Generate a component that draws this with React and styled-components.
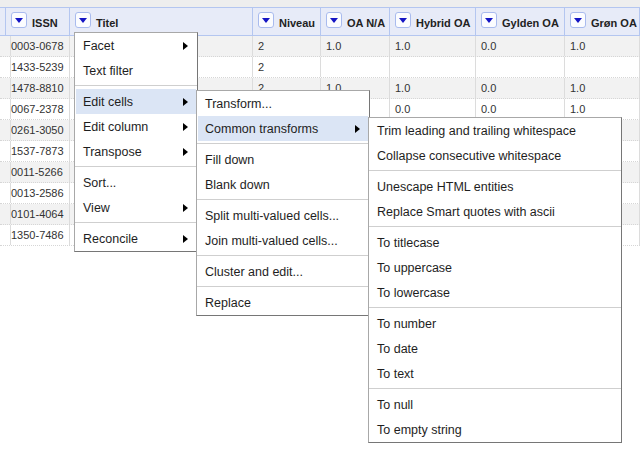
import React from "react";
import styled, { createGlobalStyle } from "styled-components";

const COLS = "6px 64px 183px 68px 69px 86px 89px 1fr";

const GlobalStyle = createGlobalStyle`
  body {
    margin: 0;
    background: #fff;
    font-family: "Liberation Sans", Arial, sans-serif;
  }
`;

const columns = ["", "ISSN", "Titel", "Niveau", "OA N/A", "Hybrid OA", "Gylden OA", "Grøn OA"];

// values under the open menus are left out, they can't be seen anyway
const rows = [
    ["0003-0678", "", "2", "1.0", "1.0", "0.0", "1.0"],
    ["1433-5239", "", "2", "", "", "", ""],
    ["1478-8810", "", "2", "1.0", "1.0", "0.0", "1.0"],
    ["0067-2378", "", "", "", "0.0", "0.0", "1.0"],
    ["0261-3050", "", "", "", "", "", ""],
    ["1537-7873", "", "", "", "", "", ""],
    ["0011-5266", "", "", "", "", "", ""],
    ["0013-2586", "", "", "", "", "", ""],
    ["0101-4064", "", "", "", "", "", ""],
    ["1350-7486", "", "", "", "", "", ""],
];

const columnMenu = [
    { label: "Facet", sub: true },
    { label: "Text filter" },
    "sep",
    { label: "Edit cells", sub: true, active: true },
    { label: "Edit column", sub: true },
    { label: "Transpose", sub: true },
    "sep",
    { label: "Sort..." },
    { label: "View", sub: true },
    "sep",
    { label: "Reconcile", sub: true },
];

const editCellsMenu = [
    { label: "Transform..." },
    { label: "Common transforms", sub: true, active: true },
    "sep",
    { label: "Fill down" },
    { label: "Blank down" },
    "sep",
    { label: "Split multi-valued cells..." },
    { label: "Join multi-valued cells..." },
    "sep",
    { label: "Cluster and edit..." },
    "sep",
    { label: "Replace" },
];

const transformsMenu = [
    { label: "Trim leading and trailing whitespace" },
    { label: "Collapse consecutive whitespace" },
    "sep",
    { label: "Unescape HTML entities" },
    { label: "Replace Smart quotes with ascii" },
    "sep",
    { label: "To titlecase" },
    { label: "To uppercase" },
    { label: "To lowercase" },
    "sep",
    { label: "To number" },
    { label: "To date" },
    { label: "To text" },
    "sep",
    { label: "To null" },
    { label: "To empty string" },
];

const DropdownMenu = ({ items, top, left, width }) => (
    <Menu $top={top} $left={left} $width={width}>
        {items.map((item, i) =>
            item === "sep" ? (
                <Separator key={i} />
            ) : (
                <Item key={i} $active={item.active}>
                    <span>{item.label}</span>
                    {item.sub && <Arrow />}
                </Item>
            )
        )}
    </Menu>
);

const App = () => {
    return (
        <Screen>
            <GlobalStyle />
            <TopStrip />
            <HeaderRow>
                {columns.map((name, i) => (
                    <HeaderCell key={i}>
                        {name && (
                            <ColumnButton>
                                <DownTriangle />
                            </ColumnButton>
                        )}
                        {name}
                    </HeaderCell>
                ))}
            </HeaderRow>
            {rows.map((row, r) => (
                <Row key={r} $odd={r % 2 === 0}>
                    <Cell />
                    {row.map((value, c) => (
                        <Cell key={c}>{value}</Cell>
                    ))}
                </Row>
            ))}

            <DropdownMenu items={columnMenu} top={32} left={74} width={124} />
            <DropdownMenu items={editCellsMenu} top={90} left={196} width={174} />
            <DropdownMenu items={transformsMenu} top={117} left={368} width={254} />
        </Screen>
    );
};

const Screen = styled.div`
    position: relative;
    width: 640px;
    height: 462px;
    overflow: hidden;
    background: #fff;
`;

const TopStrip = styled.div`
    height: 7px;
    background: #eeeeee;
`;

const HeaderRow = styled.div`
    display: grid;
    grid-template-columns: ${COLS};
    height: 29px;
    box-sizing: border-box;
    border-top: 1px solid #b4c6f0;
    border-bottom: 1px solid #b4c6f0;
    background: #e7ebf8;
`;

const HeaderCell = styled.div`
    display: flex;
    align-items: center;
    gap: 5px;
    padding: 3px 0 0 5px;
    border-right: 1px solid #b4c6f0;
    font-size: 11px;
    font-weight: bold;
    color: #222;
    white-space: nowrap;
    overflow: hidden;
`;

const ColumnButton = styled.span`
    align-self: flex-start;
    margin-top: 1px;
    flex: none;
    width: 16px;
    height: 16px;
    box-sizing: border-box;
    border: 1px solid #a9bbee;
    border-radius: 3px;
    background: #fbfcff;
    display: flex;
    align-items: center;
    justify-content: center;
`;

const DownTriangle = styled.span`
    width: 0;
    height: 0;
    border-left: 4px solid transparent;
    border-right: 4px solid transparent;
    border-top: 5px solid #1515c4;
    margin-top: 1px;
`;

const Row = styled.div`
    display: grid;
    grid-template-columns: ${COLS};
    height: 21px;
    box-sizing: border-box;
    border-bottom: 1px dotted #d6d6d6;
    background: ${(p) => (p.$odd ? "#f2f2f2" : "#fff")};
`;

const Cell = styled.div`
    border-right: 1px solid #dcdcdc;
    padding: 0 5px;
    font-size: 11px;
    line-height: 20px;
    color: #333;
    white-space: nowrap;
    overflow: hidden;
`;

const Menu = styled.div`
    position: absolute;
    top: ${(p) => p.$top}px;
    left: ${(p) => p.$left}px;
    width: ${(p) => p.$width}px;
    box-sizing: border-box;
    background: #fff;
    border: 1px solid;
    border-color: #a8a8a8 #767676 #767676 #a8a8a8;
    font-size: 12.5px;
    color: #1e1e1e;
`;

const Item = styled.div`
    height: 25px;
    margin: 0 1px;
    padding: 0 8px 0 7px;
    display: flex;
    align-items: center;
    justify-content: space-between;
    white-space: nowrap;
    background: ${(p) => (p.$active ? "#dbe5f5" : "transparent")};
`;

const Arrow = styled.span`
    width: 0;
    height: 0;
    border-top: 4.5px solid transparent;
    border-bottom: 4.5px solid transparent;
    border-left: 5px solid #000;
`;

const Separator = styled.div`
    margin: 2px 0 3px;
    border-top: 1px solid #cfcfcf;
`;

export default App;
